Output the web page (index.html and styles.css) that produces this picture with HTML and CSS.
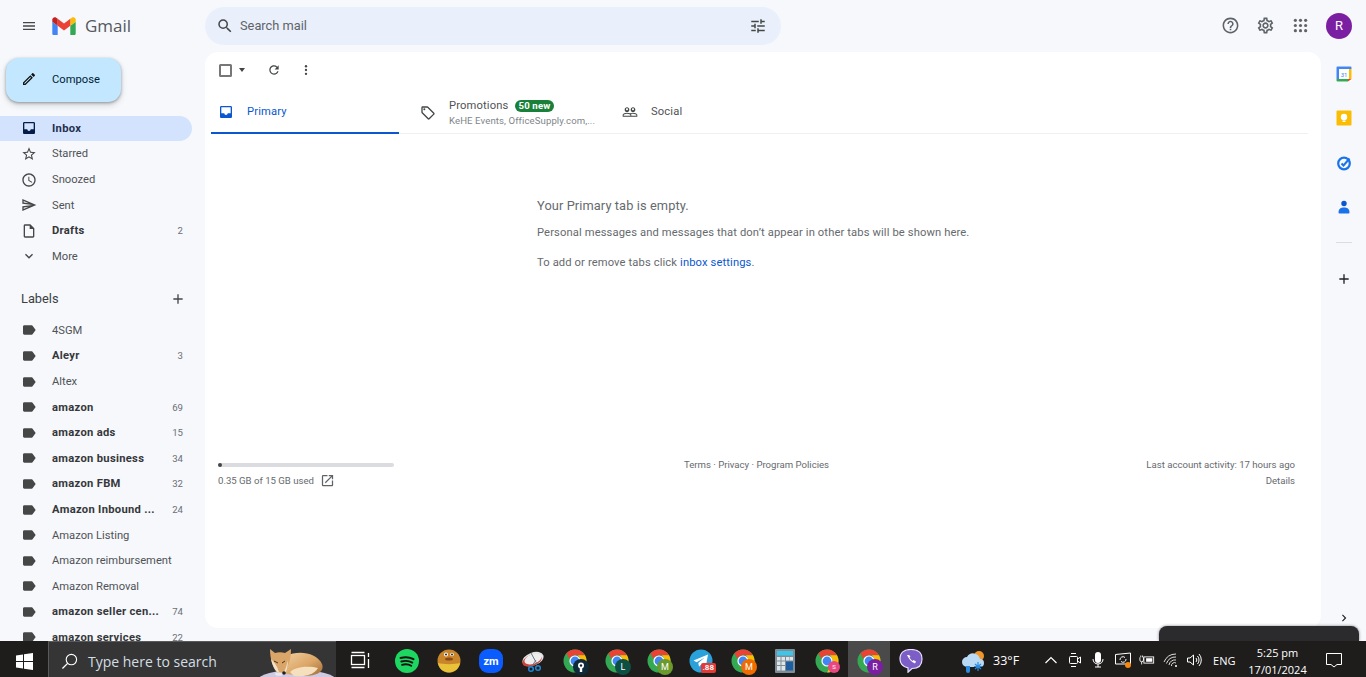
FILE: index.html
```html
<!DOCTYPE html>
<html lang="en">
<head>
    <meta charset="UTF-8">
    <meta name="viewport" content="width=device-width, initial-scale=1.0">
    <title>Inbox - Gmail</title>
    <link rel="stylesheet" href="styles.css">
</head>
<body>

<!-- shared icons -->
<svg class="defs" width="0" height="0">
    <defs>
        <linearGradient id="fox-fur" x1="0" y1="0" x2="1" y2="1">
            <stop offset="0" stop-color="#f0cd9c"/>
            <stop offset="0.55" stop-color="#dba566"/>
            <stop offset="1" stop-color="#9c6a36"/>
        </linearGradient>
    </defs>
    <symbol id="i-label" viewBox="0 0 24 24"><path d="M17.63 5.84C17.27 5.33 16.67 5 16 5L5 5.01C3.9 5.01 3 5.9 3 7v10c0 1.1.9 1.99 2 1.99L16 19c.67 0 1.27-.33 1.63-.84L22 12l-4.37-6.16z"/></symbol>
    <symbol id="i-inbox" viewBox="0 0 24 24"><path d="M19 3H5c-1.1 0-2 .9-2 2v14c0 1.1.9 2 2 2h14c1.1 0 2-.9 2-2V5c0-1.1-.9-2-2-2zm0 11h-4.500c0 1.400-1.100 2.500-2.500 2.500S9.500 15.400 9.500 14H5V5h14v9z"/></symbol>
    <symbol id="i-add" viewBox="0 0 24 24"><path d="M19 13h-6v6h-2v-6H5v-2h6V5h2v6h6v2z"/></symbol>
    <symbol id="i-chrome" viewBox="0 0 24 24">
        <circle cx="12" cy="12" r="11.500" fill="#34a853"/>
        <path fill="#ea4335" d="M12 .5a11.500 11.500 0 0 1 10 5.800H12a5.700 5.700 0 0 0-5.300 3.700L3.400 4.400A11.500 11.500 0 0 1 12 .5z"/>
        <path fill="#fbbc04" d="M22 6.300a11.500 11.500 0 0 1-10 17.200l4.900-8.600a5.700 5.700 0 0 0 0-5.900L15 6.300z"/>
        <circle cx="12" cy="12" r="5.600" fill="#fff"/>
        <circle cx="12" cy="12" r="4.400" fill="#4285f4"/>
    </symbol>
</svg>

<div class="gmail">
    <aside class="sidebar">
        <div class="brand">
            <svg class="ico menu-ico" viewBox="0 0 24 24"><path d="M3 18h18v-2H3v2zm0-5h18v-2H3v2zm0-7v2h18V6H3z"/></svg>
            <svg class="logo" viewBox="0 0 52 40">
                <path fill="#4285f4" d="M3.600 40H12V19.600L0 10.600v25.800C0 38.400 1.600 40 3.600 40z"/>
                <path fill="#34a853" d="M40 40h8.400c2 0 3.600-1.600 3.600-3.600V10.600l-12 9z"/>
                <path fill="#fbbc04" d="M40 4v15.600l12-9V5.800c0-4.500-5.100-7-8.700-4.300z"/>
                <path fill="#ea4335" d="M12 19.600V4l14 10.500L40 4v15.600L26 30.100z"/>
                <path fill="#c5221f" d="M0 5.800v4.800l12 9V4L8.700 1.500C5.100-1.200 0 1.300 0 5.800z"/>
            </svg>
            <span class="brand-name">Gmail</span>
        </div>

        <button class="compose">
            <svg class="ico" viewBox="0 0 24 24"><path d="M3 17.250V21h3.750L17.810 9.940l-3.750-3.750L3 17.250zM5.920 19H5v-.92l9.060-9.060.92.92L5.920 19zM20.710 5.630l-2.340-2.340c-.39-.39-1.020-.39-1.410 0l-1.830 1.830 3.750 3.750 1.830-1.830c.39-.39.39-1.020 0-1.410z"/></svg>
            <span>Compose</span>
        </button>

        <nav class="nav">
            <div class="row active bold"><svg class="ico"><use href="#i-inbox"/></svg><span class="name">Inbox</span></div>
            <div class="row"><svg class="ico" viewBox="0 0 24 24"><path d="M22 9.240l-7.190-.62L12 2 9.190 8.630 2 9.240l5.460 4.730L5.820 21 12 17.270 18.180 21l-1.630-7.030L22 9.240zM12 15.400l-3.760 2.270 1-4.280-3.320-2.880 4.380-.38L12 6.100l1.710 4.040 4.380.38-3.320 2.880 1 4.280L12 15.400z"/></svg><span class="name">Starred</span></div>
            <div class="row"><svg class="ico" viewBox="0 0 24 24"><path d="M11.990 2C6.470 2 2 6.480 2 12s4.470 10 9.990 10C17.520 22 22 17.520 22 12S17.520 2 11.990 2zM12 20c-4.420 0-8-3.580-8-8s3.580-8 8-8 8 3.580 8 8-3.580 8-8 8zm.5-13H11v6l5.250 3.150.75-1.230-4.500-2.670z"/></svg><span class="name">Snoozed</span></div>
            <div class="row"><svg class="ico" viewBox="0 0 24 24"><path d="M4.010 6.030l7.510 3.220-7.520-1 .01-2.220m7.500 8.720L4 17.970v-2.220l7.510-1M2.010 3L2 10l15 2-15 2 .01 7L23 12 2.010 3z"/></svg><span class="name">Sent</span></div>
            <div class="row bold"><svg class="ico" viewBox="0 0 24 24"><path d="M14 2H6c-1.100 0-1.990.9-1.990 2L4 20c0 1.100.89 2 1.990 2H18c1.100 0 2-.9 2-2V8l-6-6zm4 18H6V4h7v5h5v11z"/></svg><span class="name">Drafts</span><span class="count">2</span></div>
            <div class="row"><svg class="ico" viewBox="0 0 24 24"><path d="M16.590 8.590L12 13.170 7.410 8.590 6 10l6 6 6-6z"/></svg><span class="name">More</span></div>
        </nav>

        <div class="labels-head">
            <span>Labels</span>
            <svg class="ico"><use href="#i-add"/></svg>
        </div>

        <nav class="nav">
            <div class="row"><svg class="ico"><use href="#i-label"/></svg><span class="name">4SGM</span></div>
            <div class="row bold"><svg class="ico"><use href="#i-label"/></svg><span class="name">Aleyr</span><span class="count">3</span></div>
            <div class="row"><svg class="ico"><use href="#i-label"/></svg><span class="name">Altex</span></div>
            <div class="row bold"><svg class="ico"><use href="#i-label"/></svg><span class="name">amazon</span><span class="count">69</span></div>
            <div class="row bold"><svg class="ico"><use href="#i-label"/></svg><span class="name">amazon ads</span><span class="count">15</span></div>
            <div class="row bold"><svg class="ico"><use href="#i-label"/></svg><span class="name">amazon business</span><span class="count">34</span></div>
            <div class="row bold"><svg class="ico"><use href="#i-label"/></svg><span class="name">amazon FBM</span><span class="count">32</span></div>
            <div class="row bold"><svg class="ico"><use href="#i-label"/></svg><span class="name">Amazon Inbound ...</span><span class="count">24</span></div>
            <div class="row"><svg class="ico"><use href="#i-label"/></svg><span class="name">Amazon Listing</span></div>
            <div class="row"><svg class="ico"><use href="#i-label"/></svg><span class="name">Amazon reimbursement</span></div>
            <div class="row"><svg class="ico"><use href="#i-label"/></svg><span class="name">Amazon Removal</span></div>
            <div class="row bold"><svg class="ico"><use href="#i-label"/></svg><span class="name">amazon seller cen...</span><span class="count">74</span></div>
            <div class="row bold"><svg class="ico"><use href="#i-label"/></svg><span class="name">amazon services</span><span class="count">22</span></div>
        </nav>
    </aside>

    <div class="content">
        <header class="topbar">
            <div class="search">
                <svg class="ico search-ico" viewBox="0 0 24 24"><path d="M15.500 14h-.79l-.28-.27A6.471 6.471 0 0 0 16 9.500 6.500 6.500 0 1 0 9.500 16c1.610 0 3.090-.59 4.230-1.570l.27.28v.79l5 4.990L20.490 19l-4.990-5zm-6 0C7.010 14 5 11.990 5 9.500S7.010 5 9.500 5 14 7.010 14 9.500 11.990 14 9.500 14z"/></svg>
                <span class="search-text">Search mail</span>
                <svg class="ico tune-ico" viewBox="0 0 24 24"><path d="M3 17v2h6v-2H3zM3 5v2h10V5H3zm10 16v-2h8v-2h-8v-2h-2v6h2zM7 9v2H3v2h4v2h2V9H7zm14 4v-2H11v2h10zm-6-4h2V7h4V5h-4V3h-2v6z"/></svg>
            </div>
            <div class="top-actions">
                <svg class="ico top-ico" viewBox="0 0 24 24"><path d="M11 18h2v-2h-2v2zm1-16C6.480 2 2 6.480 2 12s4.480 10 10 10 10-4.480 10-10S17.520 2 12 2zm0 18c-4.410 0-8-3.590-8-8s3.590-8 8-8 8 3.590 8 8-3.590 8-8 8zm0-14c-2.210 0-4 1.790-4 4h2c0-1.100.9-2 2-2s2 .9 2 2c0 2-3 1.750-3 5h2c0-2.250 3-2.500 3-5 0-2.210-1.790-4-4-4z"/></svg>
                <svg class="ico top-ico" viewBox="0 0 24 24"><path d="M19.430 12.980c.04-.32.07-.64.07-.98 0-.34-.03-.66-.07-.98l2.110-1.650c.19-.15.24-.42.12-.64l-2-3.460c-.09-.16-.26-.25-.44-.25-.06 0-.12.01-.17.03l-2.490 1c-.52-.4-1.080-.73-1.690-.98l-.38-2.650C14.460 2.180 14.250 2 14 2h-4c-.25 0-.46.18-.49.42l-.38 2.650c-.61.25-1.170.59-1.690.98l-2.490-1c-.06-.02-.12-.03-.18-.03-.17 0-.34.09-.43.25l-2 3.460c-.13.22-.07.49.12.64l2.110 1.650c-.04.32-.07.65-.07.98 0 .33.03.66.07.98l-2.110 1.650c-.19.15-.24.42-.12.64l2 3.460c.09.16.26.25.44.25.06 0 .12-.01.17-.03l2.490-1c.52.4 1.080.73 1.690.98l.38 2.650c.03.24.24.42.49.42h4c.25 0 .46-.18.49-.42l.38-2.650c.61-.25 1.170-.59 1.690-.98l2.490 1c.06.02.12.03.18.03.17 0 .34-.09.43-.25l2-3.460c.12-.22.07-.49-.12-.64l-2.110-1.650zm-1.980-1.710c.04.31.05.52.05.73 0 .21-.02.43-.05.73l-.14 1.130.89.7 1.080.84-.7 1.210-1.270-.51-1.040-.42-.9.68c-.43.32-.84.56-1.250.73l-1.060.43-.16 1.130-.2 1.350h-1.400l-.19-1.350-.16-1.130-1.060-.43c-.43-.18-.83-.41-1.230-.71l-.91-.7-1.060.43-1.270.51-.7-1.210 1.080-.84.89-.7-.14-1.130c-.03-.31-.05-.54-.05-.74s.02-.43.05-.73l.14-1.130-.89-.7-1.080-.84.7-1.210 1.270.51 1.040.42.9-.68c.43-.32.84-.56 1.250-.73l1.060-.43.16-1.130.2-1.350h1.390l.19 1.350.16 1.130 1.060.43c.43.18.83.41 1.230.71l.91.7 1.060-.43 1.270-.51.7 1.210-1.070.85-.89.7.14 1.130zM12 8c-2.210 0-4 1.790-4 4s1.790 4 4 4 4-1.790 4-4-1.790-4-4-4zm0 6c-1.100 0-2-.9-2-2s.9-2 2-2 2 .9 2 2-.9 2-2 2z"/></svg>
                <svg class="ico top-ico" viewBox="0 0 24 24"><circle cx="5.500" cy="5.500" r="2"/><circle cx="12" cy="5.500" r="2"/><circle cx="18.500" cy="5.500" r="2"/><circle cx="5.500" cy="12" r="2"/><circle cx="12" cy="12" r="2"/><circle cx="18.500" cy="12" r="2"/><circle cx="5.500" cy="18.500" r="2"/><circle cx="12" cy="18.500" r="2"/><circle cx="18.500" cy="18.500" r="2"/></svg>
                <div class="avatar">R</div>
            </div>
        </header>

        <div class="workspace">
            <main class="card">
                <div class="toolbar">
                    <span class="checkbox"></span>
                    <span class="caret"></span>
                    <svg class="ico refresh-ico" viewBox="0 0 24 24"><path d="M17.650 6.350A7.958 7.958 0 0 0 12 4c-4.420 0-7.990 3.580-7.990 8s3.570 8 7.990 8c3.730 0 6.840-2.550 7.730-6h-2.080A5.990 5.990 0 0 1 12 18c-3.310 0-6-2.690-6-6s2.690-6 6-6c1.660 0 3.140.69 4.220 1.780L13 11h7V4l-2.350 2.350z"/></svg>
                    <svg class="ico more-ico" viewBox="0 0 24 24"><circle cx="12" cy="5.500" r="2"/><circle cx="12" cy="12" r="2"/><circle cx="12" cy="18.500" r="2"/></svg>
                </div>

                <div class="tabs">
                    <div class="tab tab-primary">
                        <svg class="ico"><use href="#i-inbox"/></svg>
                        <span>Primary</span>
                    </div>
                    <div class="tab tab-promo">
                        <svg class="ico" viewBox="0 0 24 24"><path d="M21.410 11.580l-9-9A2 2 0 0 0 11 2H4a2 2 0 0 0-2 2v7c0 .55.22 1.050.59 1.420l9 9a2 2 0 0 0 2.820 0l7-7c.37-.36.59-.86.59-1.410 0-.55-.23-1.060-.59-1.430zM13 20.010L4 11V4h7v-.01l9 9-7 7.020z"/><circle cx="6.500" cy="6.500" r="1.500"/></svg>
                        <div class="promo-text">
                            <div class="promo-title">Promotions <span class="new-badge">50 new</span></div>
                            <div class="promo-sub">KeHE Events, OfficeSupply.com,...</div>
                        </div>
                    </div>
                    <div class="tab tab-social">
                        <svg class="ico" viewBox="0 0 24 24"><path d="M16.500 13c-1.200 0-3.070.34-4.500 1-1.430-.67-3.300-1-4.500-1C5.330 13 1 14.080 1 16.250V19h22v-2.750c0-2.170-4.330-3.250-6.500-3.250zm-4 4.500h-10v-1.250c0-.54 2.560-1.750 5-1.750s5 1.210 5 1.750v1.250zm9 0H14v-1.250c0-.46-.2-.86-.52-1.220.88-.3 1.960-.53 3.020-.53 2.440 0 5 1.210 5 1.750v1.250zM7.500 12c1.930 0 3.500-1.570 3.500-3.500S9.430 5 7.500 5 4 6.570 4 8.500 5.570 12 7.500 12zm0-5.500c.83 0 1.500.67 1.500 1.500s-.67 1.500-1.500 1.500S6 8.830 6 8s.67-1.500 1.500-1.500zm9 5.500c1.930 0 3.500-1.570 3.500-3.500S18.430 5 16.500 5 13 6.570 13 8.500s1.570 3.500 3.500 3.500zm0-5.500c.83 0 1.500.67 1.500 1.500s-.67 1.500-1.500 1.500S15 8.830 15 8s.67-1.500 1.500-1.500z"/></svg>
                        <span>Social</span>
                    </div>
                </div>

                <section class="empty">
                    <h2>Your Primary tab is empty.</h2>
                    <p>Personal messages and messages that don’t appear in other tabs will be shown here.</p>
                    <p>To add or remove tabs click <a href="#">inbox settings</a>.</p>
                </section>

                <footer class="card-foot">
                    <div class="foot-col">
                        <div class="storage-bar"><div class="storage-used"></div></div>
                        <div class="storage-text">0.35 GB of 15 GB used
                            <svg class="ico open-ico" viewBox="0 0 24 24"><path d="M19 19H5V5h7V3H5a2 2 0 0 0-2 2v14a2 2 0 0 0 2 2h14c1.100 0 2-.9 2-2v-7h-2v7zM14 3v2h3.590l-9.830 9.830 1.410 1.410L19 6.410V10h2V3h-7z"/></svg>
                        </div>
                    </div>
                    <div class="foot-center">Terms · Privacy · Program Policies</div>
                    <div class="foot-col foot-right">
                        <div>Last account activity: 17 hours ago</div>
                        <div class="details">Details</div>
                    </div>
                </footer>
            </main>

            <aside class="rail">
                <svg class="rail-ico" viewBox="0 0 16 16">
                    <rect x="0.500" y="0.500" width="15" height="15" rx="1" fill="#fff"/>
                    <path fill="#4285f4" d="M1.500.5h13a1 1 0 0 1 1 1V3H.5V1.500a1 1 0 0 1 1-1zM.5 3H3v10H.5z"/>
                    <path fill="#fbbc04" d="M13 3h2.500v10H13z"/>
                    <path fill="#34a853" d="M.5 13H12v2.500H1.500a1 1 0 0 1-1-1z"/>
                    <path fill="#ea4335" d="M12 13h3.500L12 15.500z"/>
                    <text x="8" y="10.800" class="cal-day">31</text>
                </svg>
                <svg class="rail-ico" viewBox="0 0 16 16">
                    <rect x="0.500" y="0.500" width="15" height="15" rx="1" fill="#fbbc04"/>
                    <circle cx="8" cy="7" r="3.200" fill="#fff"/>
                    <rect x="6.500" y="10.500" width="3" height="1.500" fill="#fff"/>
                </svg>
                <svg class="rail-ico" viewBox="0 0 16 16">
                    <circle cx="8" cy="8.500" r="5.800" fill="none" stroke="#1a73e8" stroke-width="2.200"/>
                    <path d="M5.500 8.500l2 2 6-7" fill="none" stroke="#1a73e8" stroke-width="2"/>
                </svg>
                <svg class="rail-ico" viewBox="0 0 16 16">
                    <circle cx="8" cy="4.500" r="2.700" fill="#0b57d0"/>
                    <path d="M2.500 13.500c0-4 2.500-5 5.500-5s5.500 1 5.500 5a1 1 0 0 1-1 1h-9a1 1 0 0 1-1-1z" fill="#1a73e8"/>
                </svg>
                <div class="rail-line"></div>
                <svg class="ico rail-add"><use href="#i-add"/></svg>
                <svg class="ico rail-chev" viewBox="0 0 24 24"><path d="M10 6L8.590 7.410 13.170 12l-4.580 4.590L10 18l6-6z"/></svg>
            </aside>
        </div>
    </div>
</div>

<!-- dark notification tab that sits over the page -->
<div class="toast-edge"></div>

<div class="taskbar">
    <div class="start">
        <svg width="17" height="17" viewBox="0 0 17 17"><path fill="#fff" d="M0 2.400l7-1v6.500H0zM8 1.300l9-1.300v7.900H8zM0 9h7v6.600l-7-1zM8 9h9v8l-9-1.300z"/></svg>
    </div>
    <div class="task-search">
        <svg class="glass" viewBox="0 0 18 18"><circle cx="11" cy="7" r="5.500" fill="none" stroke="#fff" stroke-width="1.200"/><path d="M7 11l-5.500 5.500" stroke="#fff" stroke-width="1.400"/></svg>
        <span class="task-search-text">Type here to search</span>
        <svg class="fox" viewBox="0 0 76 36">
            <ellipse cx="37" cy="38" rx="39" ry="10" fill="#cfc9e4"/>
            <path d="M26 14C38 8 56 10 62 22c3 8-6 12-18 12l-18-2z" fill="url(#fox-fur)"/>
            <path d="M30 30c6-6 20-6 28-4-4 7-14 9-24 8z" fill="#f5dfbd"/>
            <path d="M10 7l5 4c3-1 7-1 10 0l6-4c0 7-1 12-3 17l-3 8h-6C13 28 10 17 10 7z" fill="#d9a568"/>
            <path d="M11 17c4 4 6 7 8 13h-2c-3-3-5-8-6-13zM28 18c-1 4-2 8-4 12h2c1-3 2-7 2-12z" fill="#f3e2c8"/>
            <path d="M14 19l4 2M25 19l-3 2" stroke="#4a3018" stroke-width="1"/>
            <ellipse cx="19" cy="32" rx="4" ry="1.800" fill="#e9e6ee"/>
            <circle cx="24" cy="31" r="1.800" fill="#222"/>
        </svg>
    </div>
    <div class="task-apps">
        <div class="task-item task-view">
            <svg class="task-ico" viewBox="0 0 24 24" fill="none" stroke="#fff" stroke-width="1.300"><rect x="3.500" y="6.500" width="13" height="9"/><path d="M3.500 3.500h13M3.500 18.500h13M20.500 4v4M20.500 10v9"/></svg>
        </div>
        <div class="task-item">
            <svg class="task-ico" viewBox="0 0 24 24"><circle cx="12" cy="12" r="12" fill="#1ed760"/><path d="M5.500 9c4.500-1.300 9-1 13 1.200M6.300 12.500c3.800-1 7.800-.8 11 1.100M7 15.800c3.200-.8 6.500-.6 9.200 1" fill="none" stroke="#111" stroke-width="1.900" stroke-linecap="round"/></svg>
        </div>
        <div class="task-item">
            <svg class="task-ico" viewBox="0 0 24 24"><circle cx="12" cy="12" r="11.500" fill="#c9852a"/><path d="M1 14c5 1.500 17 1.500 22 0-1 6-6 9.500-11 9.500S2 20 1 14z" fill="#e9c23a"/><circle cx="9" cy="5.500" r="2" fill="#fff"/><circle cx="9" cy="5.500" r="1" fill="#222"/><circle cx="15" cy="5.500" r="1.800" fill="#fff"/><circle cx="15" cy="5.500" r="1" fill="#222"/><ellipse cx="12" cy="10" rx="4" ry="1.600" fill="#8a4a18"/></svg>
        </div>
        <div class="task-item">
            <svg class="task-ico" viewBox="0 0 24 24"><rect width="24" height="24" rx="9" fill="#0b5cff"/><text x="12" y="15.500" class="zm-text">zm</text></svg>
        </div>
        <div class="task-item">
            <svg class="task-ico" viewBox="0 0 24 24"><ellipse cx="12" cy="10" rx="11" ry="6.500" fill="#e4e4e4" transform="rotate(-20 12 10)"/><ellipse cx="11" cy="11.500" rx="10" ry="5.500" fill="#c8453e" transform="rotate(-20 11 11.500)"/><ellipse cx="12" cy="10" rx="9" ry="4.800" fill="#eee" transform="rotate(-20 12 10)"/><path d="M10 4l6 11M15 11l-4 6" stroke="#6a7a88" stroke-width="1"/><circle cx="10" cy="20" r="2.300" fill="none" stroke="#1c87d6" stroke-width="1.500"/><circle cx="17" cy="19" r="2.300" fill="none" stroke="#1c87d6" stroke-width="1.500"/></svg>
        </div>
        <div class="task-item">
            <svg class="task-ico"><use href="#i-chrome"/></svg>
            <span class="task-badge badge-key"><svg viewBox="0 0 12 12" width="12" height="12"><circle cx="6" cy="4.500" r="3" fill="#fff"/><rect x="4.800" y="5" width="2.400" height="6" fill="#fff"/><circle cx="6" cy="4.500" r="1.200" fill="#123"/></svg></span>
        </div>
        <div class="task-item">
            <svg class="task-ico"><use href="#i-chrome"/></svg>
            <span class="task-badge badge-l">L</span>
        </div>
        <div class="task-item">
            <svg class="task-ico"><use href="#i-chrome"/></svg>
            <span class="task-badge badge-m">M</span>
        </div>
        <div class="task-item">
            <svg class="task-ico" viewBox="0 0 24 24"><circle cx="12" cy="12" r="11.500" fill="#2aa1db"/><path d="M4.500 11.500l14.500-6-2.400 13-4.400-3-2.200 2.200-.7-3.700 6.400-5.400-8 4.700z" fill="#fff"/></svg>
            <span class="count-badge">.88</span>
        </div>
        <div class="task-item">
            <svg class="task-ico"><use href="#i-chrome"/></svg>
            <span class="task-badge badge-o">M</span>
        </div>
        <div class="task-item">
            <svg class="task-ico" viewBox="0 0 24 24"><rect x="2" y="0" width="20" height="24" rx="1" fill="#7e8c97"/><rect x="4" y="2" width="16" height="4.500" fill="#3ec6e8"/><path fill="#dfe6ea" d="M4 8h3.500v3.500H4zM8.500 8H12v3.500H8.500zM13 8h3.500v3.500H13zM4 12.500h3.500V16H4zM8.500 12.500H12V16H8.500zM4 17h3.500v4.500H4zM8.500 17H12v4.500H8.500z"/><path fill="#1e5e9e" d="M13 12.500h7v9h-7z"/><path fill="#dfe6ea" d="M17 8h3v3.500h-3z"/></svg>
        </div>
        <div class="task-item">
            <svg class="task-ico"><use href="#i-chrome"/></svg>
            <span class="task-badge badge-s">S</span>
        </div>
        <div class="task-item task-current">
            <svg class="task-ico"><use href="#i-chrome"/></svg>
            <span class="task-badge badge-r">R</span>
        </div>
        <div class="task-item">
            <svg class="task-ico" viewBox="0 0 24 24"><path d="M12 .5c6.500 0 11 2.500 11 9.500s-4.500 9.500-10 9.500l-4 3.700v-4.300C3 17.500 1 14.500 1 10 1 3 5.500.5 12 .5z" fill="#7d5ec7" stroke="#e9e2ff" stroke-width="1.200"/><path d="M8 6c1.500 3.500 4 7 8 8.500l1-2-2.500-1.500-1 1c-1.200-.8-2.200-2-3-3.500l1-1L10 6z" fill="#fff"/></svg>
        </div>
    </div>

    <div class="weather">
        <svg class="weather-ico" viewBox="0 0 26 24">
            <circle cx="18" cy="7" r="5" fill="#f0962b"/>
            <path d="M6 18a5 5 0 0 1 0-10 7 7 0 0 1 13 2 4 4 0 0 1 0 8z" fill="#b9d9f5"/>
            <path d="M5 17h4v5a2 2 0 0 1-4 0z" fill="#2a8be0"/>
            <path d="M17 13v9M13 17.500h8M14 15l6 5M20 15l-6 5" stroke="#2a8be0" stroke-width="1.200"/>
        </svg>
        <span>33°F</span>
    </div>

    <div class="tray">
        <svg class="tray-ico" viewBox="0 0 16 16" fill="none" stroke="#fff" stroke-width="1.200"><path d="M2.500 11L8 5.500l5.500 5.500"/></svg>
        <svg class="tray-ico" viewBox="0 0 16 16" fill="none" stroke="#fff" stroke-width="1"><rect x="2.500" y="4.500" width="8" height="7" rx="1"/><path d="M10.500 7l3-2v6l-3-2M4 1.500h5M4 14.500h5"/></svg>
        <svg class="tray-ico" viewBox="0 0 16 16"><rect x="5" y="0" width="6" height="11" rx="3" fill="#fff"/><path d="M3 7c0 3 2 5 5 5s5-2 5-5M8 12v3M5 15h6" fill="none" stroke="#fff"/></svg>
        <svg class="tray-ico tray-sync" viewBox="0 0 18 18"><path d="M1.500 3.500l15-1.500v11H1.500z" fill="none" stroke="#fff"/><path d="M6 9a3 3 0 0 1 5-2.500M12 8a3 3 0 0 1-5 2.500" fill="none" stroke="#fff"/><circle cx="14" cy="14" r="3" fill="#f28a0f"/></svg>
        <svg class="tray-ico" viewBox="0 0 18 16" fill="none" stroke="#fff"><rect x="5.500" y="4.500" width="11" height="7"/><rect x="8" y="6" width="7" height="4" fill="#fff" stroke="none"/><path d="M1 5v3a2 2 0 0 0 4 0V5M2 3v2M4 3v2M3 10v3"/></svg>
        <svg class="tray-ico" viewBox="0 0 16 16" fill="none" stroke="#ddd" stroke-width="1"><path d="M1 10a13 13 0 0 1 12-8M3.500 11.500A9 9 0 0 1 13 5M6 13a6 6 0 0 1 7-5M8.500 14a3 3 0 0 1 4.500-3"/><circle cx="13" cy="14" r="1" fill="#fff" stroke="none"/></svg>
        <svg class="tray-ico" viewBox="0 0 16 16" fill="none" stroke="#fff"><path d="M1.500 6v4h2.500l3.500 3V3L4 6zM10 6a3 3 0 0 1 0 4M11.500 4a6 6 0 0 1 0 8M13 2a9 9 0 0 1 0 12"/></svg>
    </div>
    <span class="lang">ENG</span>
    <div class="clock">
        <div>5:25 pm</div>
        <div>17/01/2024</div>
    </div>
    <div class="notif">
        <svg width="16" height="15" viewBox="0 0 16 15" fill="none" stroke="#fff"><path d="M.5.500h15v11h-4.500L8 14l-3-2.500H.5z"/></svg>
    </div>
</div>

</body>
</html>
```

FILE: styles.css
```css
html, body {
    margin: 0;
    height: 100%;
    overflow: hidden;
}
body {
    display: flex;
    flex-direction: column;
    font-family: Roboto, "Liberation Sans", sans-serif;
    font-size: 11.2px;
    color: #505356;
    background: #f6f8fc;
}
.defs {
    position: absolute;
}
.ico {
    width: 16px;
    height: 16px;
    flex: none;
    fill: #444746;
}

.gmail {
    flex: 1;
    min-height: 0;
    display: flex;
}

/* left column */
.sidebar {
    width: 205px;
    flex: none;
    overflow: hidden;
}
.brand {
    height: 52px;
    display: flex;
    align-items: center;
    padding-left: 21px;
}
.menu-ico {
    width: 16px;
    height: 16px;
    margin-top: -1px;
}
.logo {
    width: 24px;
    height: 18px;
    margin-left: 15px;
}
.brand-name {
    margin: -2px 0 0 9px;
    font-family: "Open Sans", sans-serif;
    font-size: 17px;
    color: #55585c;
}
.compose {
    display: flex;
    align-items: center;
    gap: 15px;
    width: 115px;
    height: 44px;
    margin: 6px 0 13.6px 6px;
    padding: 0 0 2px 15px;
    border: none;
    border-radius: 13px;
    background: #c2e7ff;
    box-shadow: 0 1px 3px rgba(60, 64, 67, 0.45), 0 3px 6px rgba(60, 64, 67, 0.2);
    font-family: inherit;
    font-size: 11.2px;
    color: #001d35;
}
.compose .ico {
    fill: #111;
}
.nav {
    display: flex;
    flex-direction: column;
}
.row {
    display: flex;
    align-items: center;
    width: 192px;
    height: 25.6px;
    box-sizing: border-box;
    padding: 0 9px 0 21px;
    border-radius: 0 13px 13px 0;
}
.row .ico {
    margin-right: 15px;
}
.name {
    flex: 1;
    white-space: nowrap;
}
.count {
    font-size: 9.6px;
    color: #6b6f73;
    font-weight: 400;
}
.bold .name {
    font-weight: 700;
    letter-spacing: 0.3px;
    color: #35373a;
}
.active {
    background: #d3e3fd;
}
.active .name {
    color: #1f2f4f;
}
.active .ico {
    fill: #041e49;
}
.labels-head {
    display: flex;
    align-items: center;
    justify-content: space-between;
    width: 186px;
    height: 36px;
    margin-top: 12.4px;
    box-sizing: border-box;
    padding: 0 0 2px 21px;
    font-size: 12.8px;
    color: #3c4043;
}

/* top row */
.content {
    flex: 1;
    min-width: 0;
    display: flex;
    flex-direction: column;
}
.topbar {
    height: 52px;
    flex: none;
    display: flex;
    align-items: center;
    padding-bottom: 1px;
    box-sizing: border-box;
}
.search {
    width: 576px;
    height: 38px;
    display: flex;
    align-items: center;
    padding: 0 14px 0 11px;
    box-sizing: border-box;
    border-radius: 19px;
    background: #e9f0fb;
}
.search-ico {
    width: 18px;
    height: 18px;
}
.search-text {
    flex: 1;
    margin-left: 6px;
    font-size: 12.8px;
    color: #5f6368;
}
.tune-ico {
    width: 18px;
    height: 18px;
}
.top-actions {
    margin-left: auto;
    display: flex;
    align-items: center;
    padding-right: 14px;
}
.top-ico {
    width: 19px;
    height: 19px;
    margin-right: 16px;
    fill: #5f6368;
}
.avatar {
    width: 26px;
    height: 26px;
    border-radius: 50%;
    background: #7b1fa2;
    color: #fff;
    font-size: 13px;
    line-height: 26px;
    text-align: center;
}

/* mail card */
.workspace {
    flex: 1;
    min-height: 0;
    display: flex;
}
.card {
    flex: 1;
    min-width: 0;
    margin-bottom: 13px;
    border-radius: 13px;
    background: #fff;
    display: flex;
    flex-direction: column;
}
.toolbar {
    height: 40px;
    display: flex;
    align-items: center;
    padding: 0 0 4px 14px;
    box-sizing: border-box;
}
.checkbox {
    width: 9px;
    height: 9px;
    border: 2px solid #777;
    border-radius: 1.5px;
}
.caret {
    width: 0;
    height: 0;
    margin-left: 7px;
    border: 3.5px solid transparent;
    border-top: 4px solid #444;
    border-bottom: none;
}
.refresh-ico {
    width: 14px;
    height: 14px;
    margin-left: 22px;
}
.more-ico {
    width: 14px;
    height: 14px;
    margin-left: 18px;
}
.tabs {
    height: 42px;
    margin: 0 13px 0 6px;
    display: flex;
    box-sizing: border-box;
    border-bottom: 1px solid #f0f0f0;
}
.tab {
    display: flex;
    align-items: center;
    box-sizing: border-box;
    height: 42px;
    gap: 13px;
    padding-bottom: 3px;
    font-size: 11.2px;
    letter-spacing: 0.15px;
}
.tab-primary {
    width: 188px;
    padding-left: 7px;
    padding-bottom: 1px;
    color: #0b57d0;
    border-bottom: 2px solid #0b57d0;
}
.tab-primary .ico {
    fill: #0b57d0;
}
.tab-promo {
    width: 208px;
    padding-left: 21px;
    padding-bottom: 1px;
}
.tab-social {
    padding-left: 15px;
}
.promo-title {
    display: flex;
    align-items: center;
    gap: 6px;
    line-height: 14px;
}
.new-badge {
    padding: 0 4px;
    border-radius: 7px;
    background: #188038;
    color: #fff;
    font-size: 9.6px;
    font-weight: 700;
    line-height: 12px;
}
.promo-sub {
    margin-top: 2px;
    font-size: 9.6px;
    line-height: 12px;
    letter-spacing: 0.09px;
    color: #80868b;
}
.empty {
    flex: none;
    height: 329px;
    box-sizing: border-box;
    padding: 64px 0 0 332px;
    color: #666a6e;
}
.empty h2 {
    margin: 0 0 13px;
    font-size: 12.8px;
    font-weight: 400;
    line-height: 15px;
    letter-spacing: 0.1px;
}
.empty p {
    margin: 0 0 14px;
    font-size: 11.2px;
    line-height: 14px;
    letter-spacing: 0.12px;
}
.empty p + p {
    margin-top: 16px;
}
.empty a {
    color: #0b57d0;
    text-decoration: none;
}
.card-foot {
    display: flex;
    padding: 0 26px 0 13px;
    font-size: 9.6px;
    color: #666a6e;
}
.foot-col {
    flex: 1;
}
.foot-center {
    margin-top: -4px;
    line-height: 11px;
}
.foot-right {
    text-align: right;
    line-height: 16px;
    margin-top: -6px;
}
.storage-bar {
    width: 176px;
    height: 4px;
    border-radius: 2px;
    background: #dadce0;
}
.storage-used {
    width: 4px;
    height: 4px;
    border-radius: 2px;
    background: #444746;
}
.storage-text {
    display: flex;
    align-items: center;
    gap: 6px;
    margin-top: 6px;
}
.open-ico {
    width: 15px;
    height: 15px;
    fill: #5f6368;
}

/* right rail */
.rail {
    width: 45px;
    flex: none;
    display: flex;
    flex-direction: column;
    align-items: center;
    margin-bottom: 16px;
    padding-top: 14px;
    box-sizing: border-box;
}
.rail-ico {
    width: 16px;
    height: 16px;
    margin-bottom: 28.3px;
}
.cal-day {
    font-family: Roboto, sans-serif;
    font-size: 6px;
    fill: #4285f4;
    text-anchor: middle;
}
.rail-line {
    width: 16px;
    height: 1px;
    margin-top: -1px;
    background: #dadce0;
}
.rail-add {
    width: 16px;
    height: 16px;
    margin-top: 27.5px;
    fill: #202124;
}
.rail-chev {
    width: 14px;
    height: 14px;
    margin-top: auto;
    fill: #202124;
}

/* windows taskbar */
.toast-edge {
    position: absolute;
    left: 1159px;
    top: 626px;
    width: 200px;
    height: 15px;
    border-radius: 8px 8px 0 0;
    background: #2b2b2e;
    box-shadow: 0 0 3px rgba(0, 0, 0, 0.5);
}
.taskbar {
    position: relative;
    height: 36px;
    flex: none;
    display: flex;
    align-items: center;
    background: #1e1d1c;
    color: #fff;
    font-family: "Open Sans", sans-serif;
    font-size: 12px;
}
.start,
.task-search,
.task-item {
    height: 36px;
    box-sizing: border-box;
    padding-top: 4px;
}
.start {
    width: 48px;
    display: flex;
    align-items: center;
    justify-content: center;
}
.task-search {
    width: 288px;
    border: 1px solid #5a5a5a;
    border-bottom: none;
    border-right: none;
    background: #353535;
    display: flex;
    align-items: center;
    overflow: hidden;
}
.glass {
    width: 17px;
    height: 17px;
    margin-left: 12px;
}
.task-search-text {
    flex: 1;
    margin-left: 10px;
    font-size: 14px;
    color: #d4dde4;
    white-space: nowrap;
}
.fox {
    width: 76px;
    height: 36px;
    flex: none;
    margin-top: -4px;
}
.task-apps {
    display: flex;
    margin-left: 3px;
}
.task-item {
    position: relative;
    width: 42px;
    display: flex;
    align-items: center;
    justify-content: center;
}
.task-view {
    margin-right: 5px;
}
.task-current {
    background: #4a4a4a;
}
.task-ico {
    width: 24px;
    height: 24px;
}
.task-badge {
    position: absolute;
    right: 7px;
    bottom: 2px;
    width: 16px;
    height: 16px;
    border-radius: 50%;
    color: #fff;
    font-family: Roboto, sans-serif;
    font-size: 9px;
    line-height: 16px;
    text-align: center;
}
.badge-key {
    background: #102a3a;
    display: flex;
    align-items: center;
    justify-content: center;
}
.badge-l { background: #0d4f43; }
.badge-m { background: #6a9a2e; }
.badge-o { background: #ef6c00; }
.badge-s { background: #e8477f; width: 12px; height: 12px; line-height: 12px; font-size: 6px; right: 8px; bottom: 4px; }
.badge-r { background: #7b1fa2; }
.count-badge {
    position: absolute;
    right: 6px;
    bottom: 4px;
    padding: 0 2px;
    border-radius: 2px;
    background: #e53935;
    font-family: Roboto, sans-serif;
    font-size: 8px;
    font-weight: 700;
    line-height: 10px;
}
.zm-text {
    font-family: Roboto, sans-serif;
    font-size: 11px;
    font-weight: 700;
    fill: #fff;
    text-anchor: middle;
}
.weather {
    display: flex;
    align-items: center;
    gap: 6px;
    margin: 3px 0 0 29px;
    font-size: 12.5px;
}
.weather-ico {
    width: 26px;
    height: 24px;
}
.tray {
    display: flex;
    align-items: center;
    gap: 7.5px;
    margin: 2px 0 0 24px;
}
.tray-ico {
    width: 16px;
    height: 16px;
}
.tray-sync {
    width: 18px;
    height: 18px;
}
.lang {
    margin: 2px 0 0 11px;
    font-size: 11px;
}
.clock {
    margin: 3px 0 0 9px;
    width: 66px;
    font-size: 11px;
    line-height: 17px;
    text-align: center;
}
.notif {
    margin: 3px 0 0 auto;
    width: 33px;
    padding-right: 16px;
    display: flex;
    justify-content: center;
}
```
